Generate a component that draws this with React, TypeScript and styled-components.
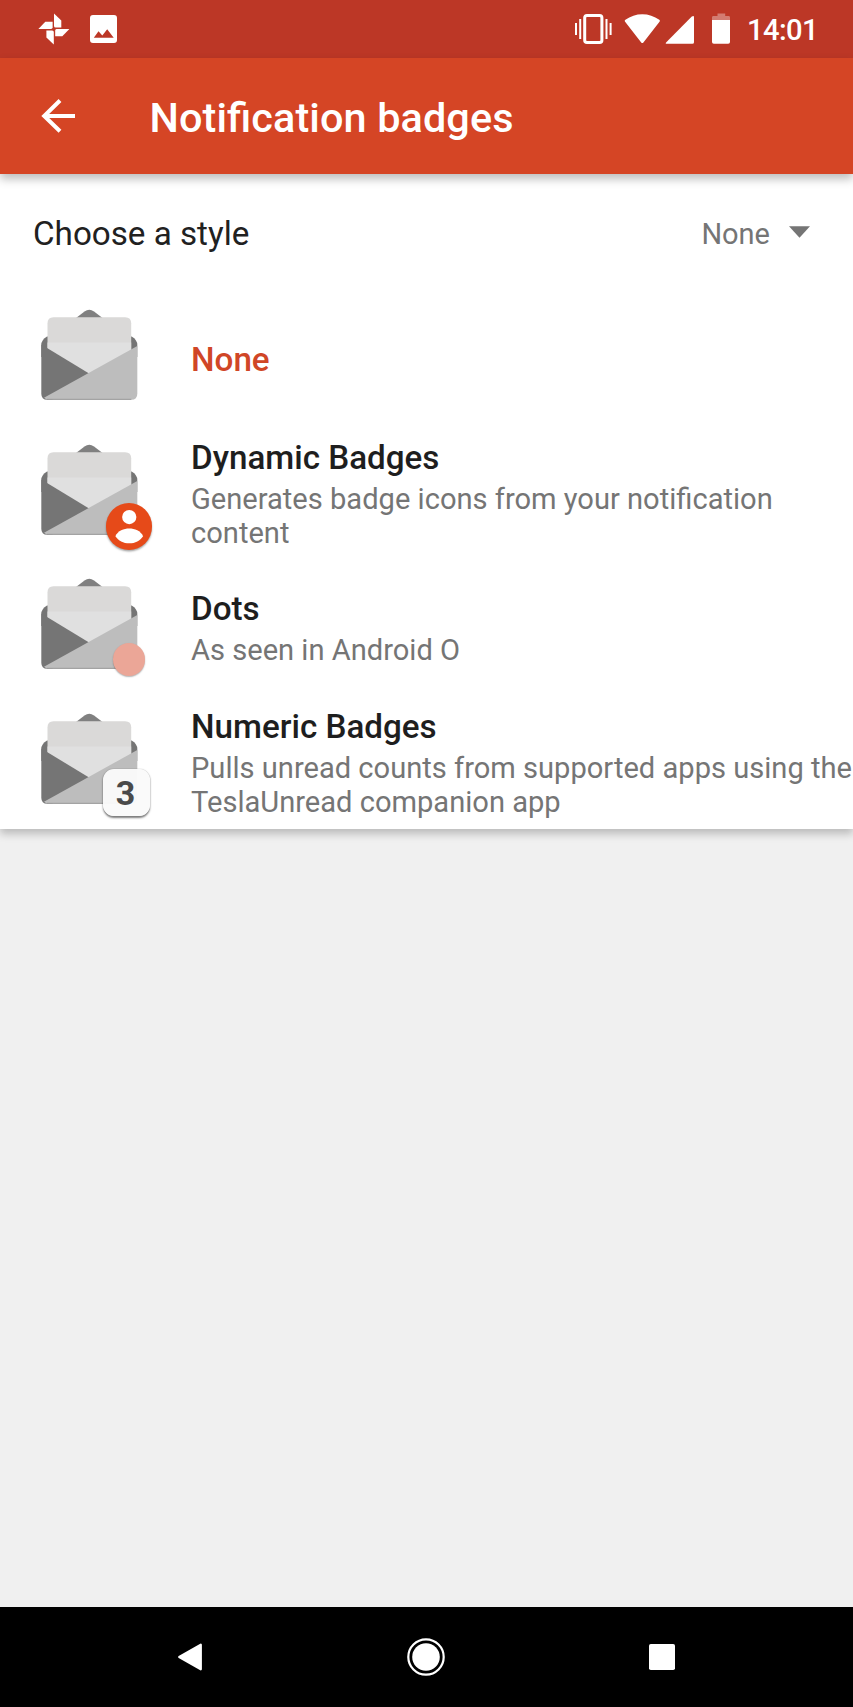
import React from "react";
import styled, { createGlobalStyle } from "styled-components";

const GlobalStyle = createGlobalStyle`
  * { box-sizing: border-box; }
  html, body { margin: 0; padding: 0; }
  body { font-family: Roboto, "Noto Sans", sans-serif; background: #f0f0f0; overflow: hidden; }
  svg { display: block; flex: none; }
`;

const Screen = styled.div`
  width: 853px;
  height: 1707px;
  display: flex;
  flex-direction: column;
  background: #f0f0f0;
  overflow: hidden;
`;

const StatusBar = styled.header`
  height: 58px;
  flex: none;
  display: flex;
  justify-content: space-between;
  background: #bc3726;
  color: #fff;
`;

const StatusGroup = styled.div`
  display: flex;
  height: 58px;
`;

const Clock = styled.span`
  width: 106px;
  padding-top: 13px;
  font-size: 29.2px;
  line-height: 35px;
  font-weight: 500;
  letter-spacing: -0.6px;
  white-space: nowrap;
`;

const AppBar = styled.div`
  position: relative;
  z-index: 2;
  height: 116px;
  flex: none;
  display: flex;
  align-items: center;
  padding-left: 41px;
  background: #d54525;
  box-shadow: 0 5px 9px rgba(0, 0, 0, 0.26);
`;

const AppTitle = styled.h1`
  margin: 3px 0 0 74.5px;
  font-size: 41.4px;
  line-height: 48px;
  font-weight: 500;
  color: #fff;
  letter-spacing: 0.1px;
  font-feature-settings: "liga" 1;
  white-space: nowrap;
`;

const Card = styled.main`
  position: relative;
  height: 654.5px;
  flex: none;
  background: #fff;
  box-shadow: 0 5px 8px rgba(0, 0, 0, 0.22);
`;

const Chooser = styled.div`
  height: 117px;
  display: flex;
  justify-content: space-between;
  padding: 40px 43px 0 33px;
`;

const ChooserLabel = styled.span`
  font-size: 33.2px;
  line-height: 39px;
  color: #212121;
`;

const Dropdown = styled.div`
  display: flex;
  align-items: flex-start;
  font-size: 29px;
  line-height: 34px;
  padding-top: 3px;
  color: #757575;
  gap: 19px;
  svg { margin-top: 9px; }
`;

const Row = styled.div`
  height: 134.6px;
  display: flex;
  align-items: center;
  padding-left: 40px;
`;

const IconSlot = styled.div`
  position: relative;
  width: 98px;
  height: 92px;
  margin: -6px 53px 0 0;
  flex: none;
`;

const RowText = styled.div`
  display: flex;
  flex-direction: column;
  padding-top: 2px;
`;

const RowTitle = styled.span<{ $active?: boolean }>`
  font-size: 33.2px;
  line-height: 39px;
  font-weight: 500;
  color: ${(p) => (p.$active ? "#d04626" : "#1e1e1e")};
  white-space: nowrap;
`;

const RowDetail = styled.span`
  margin-top: 5px;
  font-size: 29.1px;
  line-height: 34px;
  color: #757575;
  white-space: pre;
`;

const PersonBadge = styled.div`
  position: absolute;
  left: 65.5px;
  top: 59.5px;
  width: 46.5px;
  height: 46.5px;
  border-radius: 50%;
  background: #e64a19;
  box-shadow: 0 1.5px 2px rgba(0, 0, 0, 0.35);
`;

const DotBadge = styled.div`
  position: absolute;
  left: 73px;
  top: 65px;
  width: 32px;
  height: 32.5px;
  border-radius: 50%;
  background: #eba697;
  box-shadow: 0 1px 1.5px rgba(0, 0, 0, 0.3);
`;

const CountBadge = styled.div`
  position: absolute;
  left: 63px;
  top: 56px;
  width: 46.5px;
  height: 46.5px;
  border-radius: 11px;
  background: rgba(250, 250, 250, 0.96);
  box-shadow: 0 1.5px 2px rgba(0, 0, 0, 0.5), 0 0 1px rgba(0, 0, 0, 0.3);
  color: #4a4a4a;
  font-size: 34px;
  font-weight: 700;
  line-height: 49px;
  padding-right: 1.5px;
  text-align: center;
`;

const NavBar = styled.nav`
  height: 100px;
  flex: none;
  margin-top: auto;
  display: flex;
  align-items: center;
  justify-content: space-between;
  padding: 0 178px 0 177px;
  background: #000;
`;

const Envelope = () => (
  <svg width="98" height="92" viewBox="0 0 98 92">
    <path d="M34 10.5 L44.5 2.4 Q49.3 -.8 54 2.4 L64.5 10.5Z" fill="#808080" />
    <path d="M1.3 36 Q1.3 31 7 27.6 H91.7 Q97.3 31 97.3 36 V48 H1.3Z" fill="#757575" />
    <path d="M7.5 60 V14.3 Q7.5 8.3 13.5 8.3 H85.2 Q91.2 8.3 91.2 14.3 V60Z" fill="#dad9d8" />
    <path d="M7.5 33.5 H91.2 V42 L49.3 67 L7.5 42Z" fill="#e0e0e0" />
    <path d="M1.3 35.5 L49.5 64.8 L12 90.8 H7.3 Q1.3 90.8 1.3 84.8Z" fill="#757575" />
    <path d="M97.3 37 V84.8 Q97.3 90.8 91.3 90.8 H9 Q6 90.8 4 88.8Z" fill="#bdbdbd" />
    <path d="M7 90.3 H91.3" stroke="#999" strokeWidth="1" />
  </svg>
);

const Person = () => (
  <svg width="46.5" height="46.5" viewBox="0 0 47 47">
    <circle cx="23.5" cy="14.2" r="7.2" fill="#fff" />
    <path d="M9.5 33.5 C12 28 18 25.8 23.5 25.8 S35 28 37.5 33.5 C34.5 38 29.5 40.7 23.5 40.7 S12.5 38 9.5 33.5Z" fill="#fff" />
  </svg>
);

const PhotosGlyph = () => (
  <svg width="120" height="58" viewBox="0 0 120 58" fill="#fff">
    <path d="M54 13.4 L61.3 20.5 V27.6 H55.5 Q54 27.6 54 26Z" />
    <path d="M38.4 29 L45.3 21.7 H52.6 V27.3 Q52.6 29 51 29Z" />
    <path d="M46.4 30.5 H52.2 Q53.8 30.5 53.8 32 V44.4 L46.4 37.5Z" />
    <path d="M56.5 29 H69.4 L62.3 36.2 H55.2 V30.5 Q55.2 29 56.5 29Z" />
    <path fillRule="evenodd" d="M93 15 H114 Q117 15 117 18 V40 Q117 43 114 43 H93 Q90 43 90 40 V18 Q90 15 93 15Z M93.8 37.8 H113.7 L107.2 29.2 L102.3 35.5 L98.5 31.2Z" />
  </svg>
);

const SignalGlyphs = () => (
  <svg width="172" height="58" viewBox="575 0 172 58" fill="#fff">
    <rect x="584.7" y="15.5" width="17.2" height="27" rx="2.3" fill="none" stroke="#fff" strokeWidth="3" />
    <path d="M580.2 19 V39 M576 23 V35 M606.5 19 V39 M610.6 23 V35" stroke="#fff" strokeWidth="2" />
    <path d="M624.9 21.6 Q624.3 20.6 625.4 19.8 Q633 14.2 642.3 14.2 Q651.6 14.2 659.3 19.8 Q660.3 20.6 659.7 21.6 L643.4 42.4 Q642.3 43.8 641.2 42.4Z" />
    <path d="M694 17.2 V42.2 Q694 43.8 692.4 43.8 H667 Q664.8 43.8 666.3 42.2 L691.8 16.5 Q694 15 694 17.2Z" />
    <path d="M717.5 13.5 H725.2 V16 H729 Q730 16 730 17.5 V20 H712 V17.5 Q712 16 713 16 H717.5Z" opacity=".35" />
    <path d="M712 20 H730 V42 Q730 43.8 728.2 43.8 H713.8 Q712 43.8 712 42Z" />
  </svg>
);

const BackArrow = () => (
  <svg width="34" height="34" viewBox="0 0 34 34">
    <path d="M34 17 H3.5 M19 1.5 L3.2 17 L19 32.3" fill="none" stroke="#fff" strokeWidth="4" />
  </svg>
);

const options = [
  { title: "None", active: true },
  {
    title: "Dynamic Badges",
    detail: "Generates badge icons from your notification\ncontent",
    badge: <PersonBadge><Person /></PersonBadge>,
  },
  { title: "Dots", detail: "As seen in Android O", badge: <DotBadge /> },
  {
    title: "Numeric Badges",
    detail: "Pulls unread counts from supported apps using the\nTeslaUnread companion app",
    badge: <CountBadge>3</CountBadge>,
  },
];

export default function App() {
  return (
    <Screen>
      <GlobalStyle />
      <StatusBar>
        <StatusGroup><PhotosGlyph /></StatusGroup>
        <StatusGroup>
          <SignalGlyphs />
          <Clock>14:01</Clock>
        </StatusGroup>
      </StatusBar>
      <AppBar>
        <BackArrow />
        <AppTitle>Notification badges</AppTitle>
      </AppBar>
      <Card>
        <Chooser>
          <ChooserLabel>Choose a style</ChooserLabel>
          <Dropdown>
            None
            <svg width="21" height="12" viewBox="0 0 21 12"><path d="M0 .3 H21 L10.5 11.7Z" fill="#757575" /></svg>
          </Dropdown>
        </Chooser>
        {options.map((o) => (
          <Row key={o.title}>
            <IconSlot><Envelope />{o.badge}</IconSlot>
            <RowText>
              <RowTitle $active={o.active}>{o.title}</RowTitle>
              {o.detail && <RowDetail>{o.detail}</RowDetail>}
            </RowText>
          </Row>
        ))}
      </Card>
      <NavBar>
        <svg width="26" height="28" viewBox="0 0 26 28"><path d="M23.8 1.7 V26.3 L2.2 14Z" fill="#fff" stroke="#fff" strokeWidth="2.2" strokeLinejoin="round" /></svg>
        <svg width="38" height="38" viewBox="0 0 38 38">
          <circle cx="19" cy="19" r="17.7" fill="none" stroke="#fff" strokeWidth="2.2" />
          <circle cx="19" cy="19" r="13.8" fill="#fff" />
        </svg>
        <svg width="26" height="26" viewBox="0 0 26 26"><rect width="26" height="26" rx="1.8" fill="#fff" /></svg>
      </NavBar>
    </Screen>
  );
}
